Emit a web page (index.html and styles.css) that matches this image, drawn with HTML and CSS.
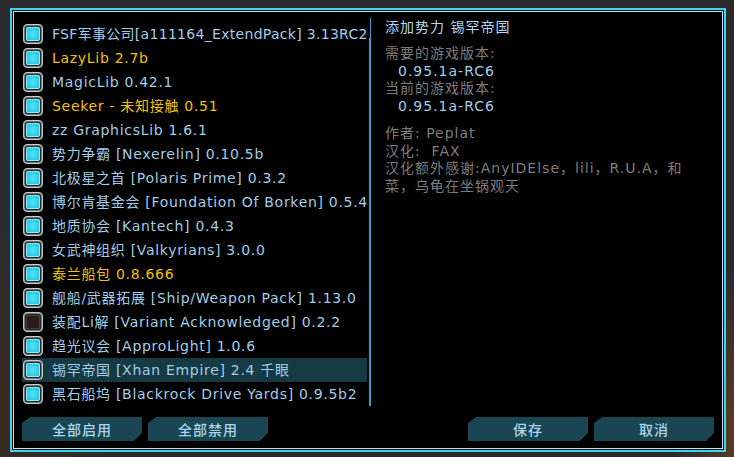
FILE: index.html
```html
<!DOCTYPE html>
<html lang="zh-CN">
<head>
    <meta charset="UTF-8">
    <meta name="viewport" content="width=device-width, initial-scale=1.0">
    <title>模组管理</title>
    <link rel="stylesheet" href="styles.css">
</head>
<body>
    <div class="dialog">
        <div class="main">
            <ul class="mod-list">
                <li class="mod tight"><span class="check"></span><span class="name">FSF军事公司[a111164_ExtendPack] 3.13RC2</span></li>
                <li class="mod util"><span class="check"></span><span class="name">LazyLib 2.7b</span></li>
                <li class="mod"><span class="check"></span><span class="name">MagicLib 0.42.1</span></li>
                <li class="mod util"><span class="check"></span><span class="name">Seeker - 未知接触 0.51</span></li>
                <li class="mod"><span class="check"></span><span class="name">zz GraphicsLib 1.6.1</span></li>
                <li class="mod"><span class="check"></span><span class="name">势力争霸 [Nexerelin] 0.10.5b</span></li>
                <li class="mod"><span class="check"></span><span class="name">北极星之首 [Polaris Prime] 0.3.2</span></li>
                <li class="mod"><span class="check"></span><span class="name">博尔肯基金会 [Foundation Of Borken] 0.5.4</span></li>
                <li class="mod"><span class="check"></span><span class="name">地质协会 [Kantech] 0.4.3</span></li>
                <li class="mod"><span class="check"></span><span class="name">女武神组织 [Valkyrians] 3.0.0</span></li>
                <li class="mod util"><span class="check"></span><span class="name">泰兰船包 0.8.666</span></li>
                <li class="mod"><span class="check"></span><span class="name">舰船/武器拓展 [Ship/Weapon Pack] 1.13.0</span></li>
                <li class="mod"><span class="check off"></span><span class="name">装配Li解 [Variant Acknowledged] 0.2.2</span></li>
                <li class="mod"><span class="check"></span><span class="name">趋光议会 [ApproLight] 1.0.6</span></li>
                <li class="mod active"><span class="check"></span><span class="name">锡罕帝国 [Xhan Empire] 2.4 千眼</span></li>
                <li class="mod"><span class="check"></span><span class="name">黑石船坞 [Blackrock Drive Yards] 0.9.5b2</span></li>
            </ul>

            <div class="scroll"></div>

            <div class="info">
                <h1 class="info-title">添加势力 锡罕帝国</h1>
                <p class="label">需要的游戏版本:</p>
                <p class="version">0.95.1a-RC6</p>
                <p class="label">当前的游戏版本:</p>
                <p class="version">0.95.1a-RC6</p>

                <div class="credits">
                    <p class="label">作者: Peplat</p>
                    <p class="label">汉化:&nbsp; FAX</p>
                    <p class="label">汉化额外感谢:AnyIDElse，lili，R.U.A，和<br>菜，乌龟在坐锅观天</p>
                </div>
            </div>
        </div>

        <div class="footer">
            <button class="btn">全部启用</button>
            <button class="btn">全部禁用</button>
            <span class="spacer"></span>
            <button class="btn">保存</button>
            <button class="btn">取消</button>
        </div>
    </div>
</body>
</html>
```

FILE: styles.css
```css
*{
    margin: 0;
    padding: 0;
    box-sizing: border-box;
    list-style-type: none;
}

body{
    width: 734px;
    height: 457px;
    overflow: hidden;
    font-family: "DejaVu Sans", "Noto Sans CJK SC", sans-serif;
    font-size: 14px;
    letter-spacing: 0.7px;
    background:
        radial-gradient(ellipse 120px 200px at 0 420px, #3a2b20, transparent),
        radial-gradient(ellipse 60px 160px at 734px 430px, #5a3a22, transparent),
        #2b2b2e;
}

.dialog{
    width: 716px;
    height: 444px;
    margin: 8px 0 0 10px;
    background: #000;
    border: 2px solid #3cd4f2;
    box-shadow: inset 0 0 0 1px #000, inset 0 0 0 2px #a6eefc;
    padding: 2px;
    display: flex;
    flex-direction: column;
}

.main{
    display: flex;
    padding: 6px 0 0 8px;
    height: 394px;
}

/* mod list */
.mod-list{
    width: 347px;
    margin-top: 4px;
    overflow: hidden;
}

.mod{
    width: 345px;
    height: 24px;
    padding-left: 1px;
    display: flex;
    align-items: center;
    white-space: nowrap;
    color: #a3cce6;
}

.mod.tight{
    letter-spacing: 0.3px;
}

.mod.util{
    color: #f2c100;
}

.mod.active{
    background: #163a44;
}

.check{
    flex: none;
    width: 20px;
    height: 20px;
    margin-right: 9px;
    border-radius: 4px;
    border: 1px solid #c8c8c8;
    background: #767676;
    padding: 2px;
    display: flex;
}

.check::after{
    content: "";
    flex: 1;
    border-radius: 2px;
    border: 1px solid #8af0ff;
    box-shadow: 0 0 0 1px #1c2a2e;
    background: radial-gradient(circle, #52e4f8, #24bcd8);
}

.check.off::after{
    border-color: #4a3a36;
    background: #2c1c19;
}

.name{
    line-height: 24px;
}

.scroll{
    width: 2px;
    height: 388px;
    background:
        linear-gradient(#3a9ccc, #3a9ccc) right top / 1px 20px no-repeat,
        linear-gradient(#3a9ccc, #3a9ccc) left 20px / 2px 368px no-repeat;
}

/* right side info */
.info{
    flex: 1;
    padding-left: 14px;
    line-height: 17.7px;
    color: #7d7d7d;
    letter-spacing: 1px;
}

.info-title{
    font-size: 14px;
    font-weight: normal;
    color: #b4d6ea;
    line-height: 18px;
    margin-bottom: 9px;
}

.version{
    color: #a3cce6;
    padding-left: 13px;
}

.credits{
    margin-top: 9px;
}

/* buttons */
.footer{
    display: flex;
    gap: 6px;
    padding: 11px 8px 0 8px;
}

.spacer{
    flex: 1;
}

.btn{
    width: 120px;
    height: 24px;
    border: none;
    background: #1a4552;
    color: #aad6ec;
    font-family: "DejaVu Sans", "Noto Sans CJK SC", sans-serif;
    font-size: 14px;
    font-weight: 500;
    letter-spacing: 1px;
    cursor: pointer;
    clip-path: polygon(8px 0, 100% 0, 100% calc(100% - 8px), calc(100% - 8px) 100%, 0 100%, 0 6px);
}
```
